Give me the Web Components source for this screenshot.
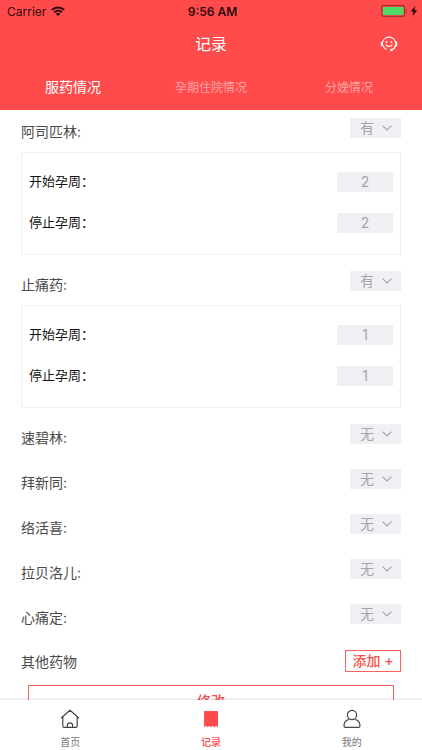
<!DOCTYPE html>
<html lang="zh-CN">
<head>
<meta charset="utf-8">
<meta name="viewport" content="width=device-width, initial-scale=1">
<title>记录</title>
<style>
  body {
    margin: 0;
    background: #fff;
    color: #4a4a4a;
    font-family: Inter, "Noto Sans CJK SC", sans-serif;
    font-size: 14px;
  }
</style>
</head>
<body>
<record-app>
  <status-bar slot="top" carrier="Carrier" time="9:56 AM"></status-bar>
  <title-bar slot="top">记录</title-bar>
  <tab-strip slot="top" tabs="服药情况,孕期住院情况,分娩情况"></tab-strip>

  <drug-item name="阿司匹林:" value="有">
    <week-box start="2" stop="2"></week-box>
  </drug-item>
  <drug-item name="止痛药:" value="有">
    <week-box start="1" stop="1"></week-box>
  </drug-item>
  <drug-item name="速碧林:" value="无"></drug-item>
  <drug-item name="拜新同:" value="无"></drug-item>
  <drug-item name="络活喜:" value="无"></drug-item>
  <drug-item name="拉贝洛儿:" value="无"></drug-item>
  <drug-item name="心痛定:" value="无"></drug-item>
  <other-drugs>其他药物</other-drugs>
  <submit-button>修改</submit-button>

  <tab-bar slot="bottom">
    <tab-link href="#home" label="首页">
      <svg width="20" height="20" viewBox="0 0 20 20" fill="none" stroke="#444" stroke-width="1.2" stroke-linecap="round" stroke-linejoin="round">
        <path d="M1.400 8.800 10 1.200l8.600 7.600M2.800 7.800v9.200c0 .8.5 1.400 1.400 1.400h11.600c.9 0 1.400-.6 1.400-1.400V7.800M7.400 18.200v-1.800a2.600 2.600 0 0 1 5.200 0v1.800"/>
      </svg>
    </tab-link>
    <tab-link href="#record" label="记录" active>
      <svg width="20" height="20" viewBox="0 0 20 20" fill="#ff4b4c">
        <path d="M3 3.200C3 2.500 3.400 2 4 2h12c.6 0 1 .5 1 1.200v15l-2-1.500-1.700 1.500-1.600-1.500-1.700 1.500-1.700-1.500-1.600 1.500L5 16.700l-2 1.500z"/>
      </svg>
    </tab-link>
    <tab-link href="#mine" label="我的">
      <svg width="20" height="20" viewBox="0 0 20 20" fill="none" stroke="#444" stroke-width="1.2" stroke-linejoin="round">
        <circle cx="10" cy="6" r="4.600"/>
        <path d="M6.600 10.400C3.600 11.600 2 14 2 16.800c0 1 .6 1.600 1.600 1.600h12.800c1 0 1.600-.6 1.600-1.600 0-2.800-1.600-5.200-4.600-6.400"/>
      </svg>
    </tab-link>
  </tab-bar>
</record-app>

<script>
class RecordApp extends HTMLElement {
  connectedCallback() {
    this.attachShadow({ mode: "open" }).innerHTML = `
      <style>
      :host {
        display: flex;
        flex-direction: column;
        height: 100vh;
      }

      header {
        background: #ff4b4c;
        color: #fff;
      }

      main {
        flex: 1;
        min-height: 0;
        overflow-y: auto;
        scrollbar-width: none;
      }
      </style>
      <header><slot name="top"></slot></header>
      <main><slot></slot></main>
      <slot name="bottom"></slot>
    `;
  }
}

class StatusBar extends HTMLElement {
  connectedCallback() {
    this.attachShadow({ mode: "open" }).innerHTML = `
      <style>
      :host {
        display: grid;
        grid-template-columns: 1fr auto 1fr;
        align-items: center;
        height: 22px;
        padding: 0 4px 0 7px;
        color: #300c0c;
        font-size: 12px;
      }

      .left, .right {
        display: flex;
        align-items: center;
        gap: 5px;
      }

      .right {
        justify-content: flex-end;
        gap: 2px;
      }

      .time {
        font-weight: 600;
      }
      </style>
      <div class="left">
        <span>${this.getAttribute("carrier")}</span>
        <svg width="14" height="10" viewBox="0 0 14 10" fill="none" stroke="#200808" stroke-width="2">
          <path d="M.8 3.900a9 9 0 0 1 12.400 0M3.100 6.200a5.700 5.700 0 0 1 7.800 0"/>
          <path d="M7 10 4.900 7.900a3 3 0 0 1 4.200 0z" fill="#200808" stroke="none"/>
        </svg>
      </div>
      <span class="time">${this.getAttribute("time")}</span>
      <div class="right">
        <svg width="27" height="12" viewBox="0 0 27 12">
          <rect x=".7" y=".7" width="23" height="10.600" rx="2" fill="none" stroke="#a33030" stroke-width="1.2"/>
          <rect x="2" y="2" width="20.400" height="8" rx="1" fill="#4cd964"/>
          <path d="M25 4c1.400.4 1.400 3.600 0 4z" fill="#a33030"/>
        </svg>
        <svg width="8" height="10" viewBox="0 0 8 10" fill="#200808">
          <path d="M5.200 0 .8 5.600h2.700L2.600 10 7.200 4.200H4.400z"/>
        </svg>
      </div>
    `;
  }
}

class TitleBar extends HTMLElement {
  connectedCallback() {
    this.attachShadow({ mode: "open" }).innerHTML = `
      <style>
      :host {
        display: grid;
        grid-template-columns: 1fr auto 1fr;
        align-items: center;
        height: 42px;
        padding: 0 24px;
      }

      h1 {
        grid-column: 2;
        margin: 0;
        font-size: 16px;
        font-weight: 400;
      }

      button {
        display: flex;
        justify-self: end;
        padding: 0;
        border: 0;
        background: none;
        cursor: pointer;
      }
      </style>
      <h1><slot></slot></h1>
      <button type="button" aria-label="客服">
        <svg width="18" height="18" viewBox="0 0 18 18" fill="none" stroke="#fff" stroke-width="1.2" stroke-linecap="round">
          <path d="M2.400 8.600a6.700 6.700 0 0 1 13.200 0M3 11.600c.5 1.500 1.500 2.700 2.900 3.500"/>
          <path d="M1.800 8.800v2.400M16.200 8.800v2.400" stroke-width="2"/>
          <path d="M15.600 11.600c-.6 2-1.900 3.400-3.800 4.200" stroke-width="1.500"/>
          <path d="M6 11c1.300 1.800 4.700 1.800 6 0"/>
          <circle cx="6.500" cy="8" r=".9" fill="#fff" stroke="none"/>
          <circle cx="11.500" cy="8" r=".9" fill="#fff" stroke="none"/>
          <circle cx="11.400" cy="16" r="1.200" fill="#fff" stroke="none"/>
        </svg>
      </button>
    `;
  }
}

class TabStrip extends HTMLElement {
  connectedCallback() {
    this.selected = 0;
    this.attachShadow({ mode: "open" });
    this.render();
  }

  render() {
    const tabs = this.getAttribute("tabs").split(",");
    this.shadowRoot.innerHTML = `
      <style>
      :host {
        display: grid;
        grid-template-columns: repeat(3, 1fr);
        height: 44px;
        padding: 0 4px 2px;
      }

      button {
        padding: 0;
        border: 0;
        background: none;
        color: #ffa3a3;
        font: inherit;
        font-size: 12px;
        cursor: pointer;
      }

      button.active {
        color: #fff;
        font-size: 14px;
      }
      </style>
      ${tabs.map((tab, i) => `<button type="button" class="${i === this.selected ? "active" : ""}">${tab}</button>`).join("")}
    `;

    this.shadowRoot.querySelectorAll("button").forEach((button, i) => {
      button.addEventListener("click", () => {
        this.selected = i;
        this.render();
      });
    });
  }
}

class DrugItem extends HTMLElement {
  connectedCallback() {
    const value = this.getAttribute("value");
    this.attachShadow({ mode: "open" }).innerHTML = `
      <style>
      :host {
        display: block;
        padding: 0 21px 3px;
      }

      .row {
        display: flex;
        justify-content: space-between;
        align-items: flex-start;
        height: 42px;
      }

      label {
        padding-top: 12px;
        line-height: 20px;
      }

      .picker {
        display: grid;
        align-items: center;
        margin-top: 8px;
      }

      select, svg {
        grid-area: 1 / 1;
      }

      select {
        appearance: none;
        width: 51px;
        height: 20px;
        padding: 0 0 0 10px;
        border: 0;
        border-radius: 0;
        background: #efeff4;
        color: #a6a6aa;
        font: inherit;
        line-height: 20px;
      }

      svg {
        justify-self: end;
        margin-right: 9px;
        pointer-events: none;
      }
      </style>
      <div class="row">
        <label for="taken">${this.getAttribute("name")}</label>
        <div class="picker">
          <select id="taken">
            <option ${value === "有" ? "selected" : ""}>有</option>
            <option ${value === "无" ? "selected" : ""}>无</option>
          </select>
          <svg width="10" height="6" viewBox="0 0 10 6" fill="none" stroke="#a6a6aa" stroke-width="1.2">
            <path d="M.5.6 5 5 9.500.6"/>
          </svg>
        </div>
      </div>
      <slot></slot>
    `;
  }
}

class WeekBox extends HTMLElement {
  connectedCallback() {
    this.attachShadow({ mode: "open" }).innerHTML = `
      <style>
      :host {
        display: block;
        margin-bottom: 5px;
        padding: 8px 7px 11px;
        border: 1px solid #efeff0;
        color: #111;
        font-size: 13px;
      }

      div {
        display: flex;
        justify-content: space-between;
        align-items: center;
        height: 41px;
      }

      label {
        padding-bottom: 2px;
      }

      input {
        box-sizing: border-box;
        width: 56px;
        height: 20px;
        padding: 0;
        border: 0;
        border-radius: 0;
        background: #efeff4;
        color: #a6a6aa;
        font: inherit;
        font-size: 14px;
        text-align: center;
      }
      </style>
      <div>
        <label for="start">开始孕周：</label>
        <input id="start" inputmode="numeric" value="${this.getAttribute("start")}">
      </div>
      <div>
        <label for="stop">停止孕周：</label>
        <input id="stop" inputmode="numeric" value="${this.getAttribute("stop")}">
      </div>
    `;
  }
}

class OtherDrugs extends HTMLElement {
  connectedCallback() {
    this.attachShadow({ mode: "open" }).innerHTML = `
      <style>
      :host {
        display: flex;
        justify-content: space-between;
        align-items: center;
        height: 40px;
        padding: 0 21px;
      }

      button {
        width: 56px;
        height: 22px;
        padding: 0;
        border: 1px solid #f5625f;
        background: #fff;
        color: #f4504d;
        font: inherit;
        font-weight: 500;
        line-height: 20px;
        cursor: pointer;
      }
      </style>
      <span><slot></slot></span>
      <button type="button">添加 +</button>
    `;
  }
}

class SubmitButton extends HTMLElement {
  connectedCallback() {
    this.attachShadow({ mode: "open" }).innerHTML = `
      <style>
      :host {
        display: flex;
        padding: 4px 28px 20px;
      }

      button {
        flex: 1;
        height: 30px;
        padding: 0;
        border: 1px solid #f5625f;
        background: #fff;
        color: #f4504d;
        font: inherit;
        font-weight: 500;
        cursor: pointer;
      }
      </style>
      <button type="submit"><slot></slot></button>
    `;
  }
}

class TabBar extends HTMLElement {
  connectedCallback() {
    this.attachShadow({ mode: "open" }).innerHTML = `
      <style>
      :host {
        display: block;
        z-index: 1;
        background: #fff;
        box-shadow: 0 -1px 2px rgba(0, 0, 0, 0.12);
      }

      nav {
        display: grid;
        grid-template-columns: repeat(3, 1fr);
        height: 50px;
      }
      </style>
      <nav><slot></slot></nav>
    `;
  }
}

class TabLink extends HTMLElement {
  connectedCallback() {
    this.attachShadow({ mode: "open" }).innerHTML = `
      <style>
      :host {
        display: block;
        color: #777;
      }

      :host([active]) {
        color: #ff4b4c;
        font-weight: 500;
      }

      a {
        display: flex;
        flex-direction: column;
        align-items: center;
        gap: 6px;
        padding-top: 9px;
        color: inherit;
        font-size: 10px;
        line-height: 14px;
        text-decoration: none;
      }

      ::slotted(svg) {
        display: block;
      }
      </style>
      <a href="${this.getAttribute("href")}"><slot></slot><span>${this.getAttribute("label")}</span></a>
    `;
  }
}

customElements.define("record-app", RecordApp);
customElements.define("status-bar", StatusBar);
customElements.define("title-bar", TitleBar);
customElements.define("tab-strip", TabStrip);
customElements.define("drug-item", DrugItem);
customElements.define("week-box", WeekBox);
customElements.define("other-drugs", OtherDrugs);
customElements.define("submit-button", SubmitButton);
customElements.define("tab-bar", TabBar);
customElements.define("tab-link", TabLink);
</script>
</body>
</html>
